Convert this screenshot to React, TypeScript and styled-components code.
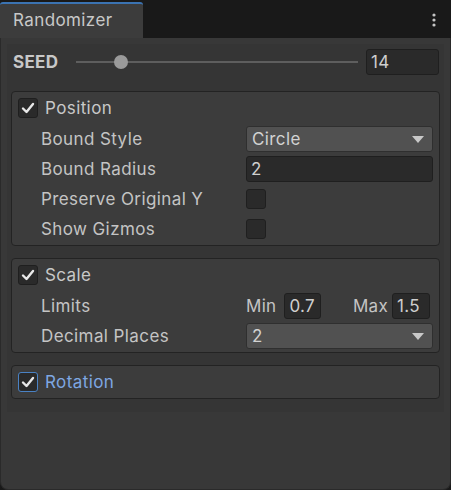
import React from "react";
import styled, { createGlobalStyle } from "styled-components";

const Global = createGlobalStyle`
  html, body { margin: 0; padding: 0; background: #191919; }
  body { font-family: Inter, "Noto Sans", sans-serif; }
  * { box-sizing: border-box; }
`;

const Window = styled.div`
  width: 451px;
  height: 490px;
  display: flex;
  flex-direction: column;
  background: #191919;
`;

const Header = styled.div`
  height: 38px;
  display: flex;
  align-items: flex-end;
  justify-content: space-between;
  padding-top: 2px;
`;

const Tab = styled.div`
  width: 143px;
  height: 36px;
  background: #3c3c3c;
  border-top: 2px solid #3b73b2;
  border-radius: 3px 3px 0 0;
  color: #c8c8c8;
  font-size: 17px;
  letter-spacing: 0.4px;
  padding: 6px 0 0 13px;
`;

const Kebab = styled.div`
  align-self: center;
  width: 14px;
  margin-right: 10px;
  display: flex;
  justify-content: center;
`;

const Body = styled.div`
  flex: 1;
  background: #383838;
  border-radius: 0 0 8px 8px;
  padding: 6px 6px 0 6px;
  border: 1px solid #2a2a2a;
  border-top: none;
`;

const Inner = styled.div`
  background: #353535;
  padding: 4px 4px 13px 4px;
  display: flex;
  flex-direction: column;
`;

const SeedRow = styled.div`
  height: 28px;
  display: flex;
  align-items: center;
  padding-left: 2px;
  margin-bottom: 15px;
`;

const SeedLabel = styled.div`
  width: 63px;
  color: #c8c8c8;
  font-size: 17px;
  font-weight: 700;
  letter-spacing: 0.3px;
`;

const Slider = styled.div`
  position: relative;
  width: 282px;
  height: 2px;
  background: #5e5e5e;
  margin-right: 8px;
`;

const Thumb = styled.div`
  position: absolute;
  top: -6px;
  width: 14px;
  height: 14px;
  border-radius: 50%;
  background: #9a9a9a;
`;

const Field = styled.div<{ $w?: number }>`
  width: ${(p) => (p.$w ? `${p.$w}px` : "auto")};
  flex: ${(p) => (p.$w ? "none" : "1")};
  height: 26px;
  background: #2a2a2a;
  border: 1px solid #1f1f1f;
  border-radius: 3px;
  color: #cfcfcf;
  font-size: 17px;
  letter-spacing: 0.3px;
  display: flex;
  align-items: center;
  padding-left: 4px;
`;

const Group = styled.div<{ $last?: boolean }>`
  border: 1px solid #232323;
  border-radius: 4px;
  background: #3c3c3c;
  padding: 0 6px 1px 6px;
  margin-bottom: ${(p) => (p.$last ? "0" : "12px")};
  display: flex;
  flex-direction: column;
`;

const Row = styled.div<{ $h?: number }>`
  height: ${(p) => p.$h ?? 30}px;
  display: flex;
  align-items: center;
`;

const HeaderLabel = styled.div<{ $active?: boolean }>`
  margin-left: 7px;
  color: ${(p) => (p.$active ? "#7ea7e2" : "#c8c8c8")};
  font-size: 17px;
  letter-spacing: 0.4px;
`;

const Label = styled.div`
  width: 228px;
  padding-left: 23px;
  color: #c4c4c4;
  font-size: 17px;
  letter-spacing: 0.4px;
`;

const Control = styled.div`
  flex: 1;
  display: flex;
  align-items: center;
`;

const Check = styled.div<{ $blue?: boolean }>`
  width: 20px;
  height: 20px;
  border-radius: 3px;
  background: #2a2a2a;
  border: 1px solid ${(p) => (p.$blue ? "#4a82c4" : "#1f1f1f")};
  display: flex;
  align-items: center;
  justify-content: center;
`;

const Dropdown = styled.div`
  flex: 1;
  height: 26px;
  background: #515151;
  border: 1px solid #2f2f2f;
  border-radius: 3px;
  color: #d2d2d2;
  font-size: 17px;
  letter-spacing: 0.4px;
  display: flex;
  align-items: center;
  justify-content: space-between;
  padding: 0 8px 0 5px;
`;

const Arrow = styled.div`
  width: 0;
  height: 0;
  border-left: 6px solid transparent;
  border-right: 6px solid transparent;
  border-top: 7px solid #c8c8c8;
`;

const MinMax = styled.span<{ $gap: number }>`
  color: #c4c4c4;
  font-size: 17px;
  letter-spacing: 0.3px;
  margin-right: ${(p) => p.$gap}px;
`;

const Spacer = styled.div`
  flex: 1;
`;

const EndGap = styled.div`
  width: 3px;
`;

const Tick = () => (
  <svg width="14" height="12" viewBox="0 0 14 12">
    <path d="M2 6.5 L5.5 10 L12 2" fill="none" stroke="#e8e8e8" strokeWidth="2.4" strokeLinecap="round" strokeLinejoin="round" />
  </svg>
);

const Toggle = ({ on, blue }: { on?: boolean; blue?: boolean }) => (
  <Check $blue={blue}>{on && <Tick />}</Check>
);

const SLIDER_W = 282;
const THUMB = 14;
const seed = 14;

export default function App() {
  return (
    <>
      <Global />
      <Window>
        <Header>
          <Tab>Randomizer</Tab>
          <Kebab>
            <svg width="4" height="14" viewBox="0 0 4 14">
              <circle cx="2" cy="2" r="1.6" fill="#c4c4c4" />
              <circle cx="2" cy="7" r="1.6" fill="#c4c4c4" />
              <circle cx="2" cy="12" r="1.6" fill="#c4c4c4" />
            </svg>
          </Kebab>
        </Header>
        <Body>
          <Inner>
            <SeedRow>
              <SeedLabel>SEED</SeedLabel>
              <Slider>
                <Thumb style={{ left: `${(seed / 100) * (SLIDER_W - THUMB)}px` }} />
              </Slider>
              <Field $w={73}>14</Field>
            </SeedRow>

            <Group>
              <Row $h={32}>
                <Toggle on />
                <HeaderLabel>Position</HeaderLabel>
              </Row>
              <Row>
                <Label>Bound Style</Label>
                <Control>
                  <Dropdown>
                    Circle
                    <Arrow />
                  </Dropdown>
                </Control>
              </Row>
              <Row>
                <Label>Bound Radius</Label>
                <Control>
                  <Field>2</Field>
                </Control>
              </Row>
              <Row>
                <Label>Preserve Original Y</Label>
                <Control>
                  <Toggle />
                </Control>
              </Row>
              <Row>
                <Label>Show Gizmos</Label>
                <Control>
                  <Toggle />
                </Control>
              </Row>
            </Group>

            <Group>
              <Row $h={32}>
                <Toggle on />
                <HeaderLabel>Scale</HeaderLabel>
              </Row>
              <Row>
                <Label>Limits</Label>
                <Control>
                  <MinMax $gap={8}>Min</MinMax>
                  <Field $w={37}>0.7</Field>
                  <Spacer />
                  <MinMax $gap={4}>Max</MinMax>
                  <Field $w={38}>1.5</Field>
                  <EndGap />
                </Control>
              </Row>
              <Row>
                <Label>Decimal Places</Label>
                <Control>
                  <Dropdown>
                    2
                    <Arrow />
                  </Dropdown>
                </Control>
              </Row>
            </Group>

            <Group $last>
              <Row $h={31}>
                <Toggle on blue />
                <HeaderLabel $active>Rotation</HeaderLabel>
              </Row>
            </Group>
          </Inner>
        </Body>
      </Window>
    </>
  );
}
